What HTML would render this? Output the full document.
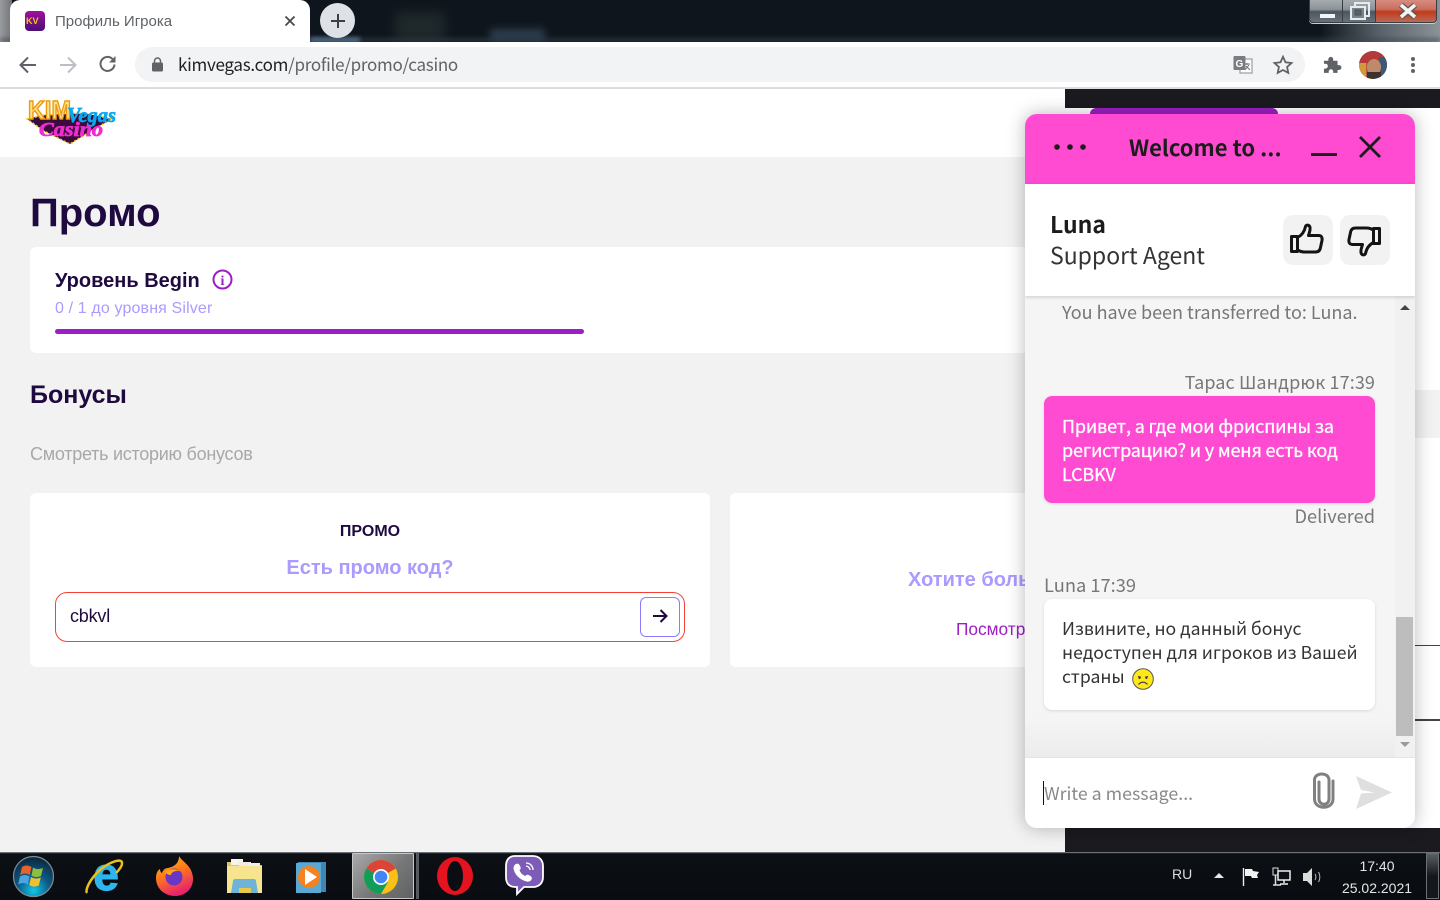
<!DOCTYPE html>
<html lang="ru"><head><meta charset="utf-8"><title>Профиль Игрока</title>
<style>
html,body{margin:0;padding:0;width:1440px;height:900px;overflow:hidden;background:#fff;font-family:"Liberation Sans",sans-serif}
.a{position:absolute}
.t{position:absolute;white-space:nowrap;line-height:1}
.n{font-family:"Noto Sans CJK SC","Noto Sans CJK JP","Liberation Sans",sans-serif}
svg{position:absolute;display:block;overflow:visible}
</style></head><body>

<!-- title bar -->
<div class="a" style="left:0;top:0;width:1440px;height:42px;background:#0e151c;overflow:hidden">
  <div class="a" style="left:0;top:0;width:12px;height:42px;background:linear-gradient(90deg,#9a9c9e,#70757a)"></div>
  <div class="a" style="left:1320px;top:0;width:120px;height:42px;background:linear-gradient(90deg,#0e151c 0,#59626a 50%,#8b9298 100%)"></div>
  <div class="a" style="left:395px;top:12px;width:50px;height:30px;background:#2d3a38;filter:blur(6px);opacity:.55"></div>
  <div class="a" style="left:490px;top:29px;width:55px;height:12px;background:#3a4f66;filter:blur(4px);opacity:.7"></div>
  <div class="a" style="left:310px;top:38px;width:50px;height:4px;background:#6fa0cc;filter:blur(2px)"></div>
  <div class="a" style="left:0;top:38px;width:1440px;height:4px;background:#3a434c;filter:blur(2px);opacity:.6"></div>
</div>
<!-- window buttons -->
<div class="a" style="left:1309px;top:-2px;width:34px;height:25px;background:linear-gradient(#a7adb1 0,#8d9499 45%,#4c5660 55%,#68727c 100%);border:1px solid #3a3f44;box-sizing:border-box;border-radius:0 0 0 4px;box-shadow:0 1px 0 #c9cdd0"></div>
<div class="a" style="left:1343px;top:-2px;width:33px;height:25px;background:linear-gradient(#a7adb1 0,#8d9499 45%,#4c5660 55%,#68727c 100%);border:1px solid #3a3f44;border-left:0;box-sizing:border-box;box-shadow:0 1px 0 #c9cdd0"></div>
<div class="a" style="left:1376px;top:-2px;width:61px;height:25px;background:linear-gradient(#d98f82 0,#c96e5e 45%,#c23a1a 55%,#b96a58 100%);border:1px solid #3a3f44;border-left:0;box-sizing:border-box;border-radius:0 0 4px 0;box-shadow:0 1px 0 #c9cdd0"></div>
<div class="a" style="left:1320px;top:14px;width:15px;height:4px;background:#f2f4f5"></div>
<svg style="left:0;top:0" width="1440" height="30">
  <rect x="1355" y="3" width="14" height="13" fill="none" stroke="#e8ebec" stroke-width="2"/>
  <rect x="1351" y="7" width="14" height="12" fill="#7a838a" stroke="#e8ebec" stroke-width="2"/>
  <rect x="1355" y="10" width="6" height="5" fill="#59626a" stroke="#4a5157" stroke-width="1"/>
  <path d="M1401 5l14 12M1415 5l-14 12" stroke="#555" stroke-width="6"/>
  <path d="M1401 5l14 12M1415 5l-14 12" stroke="#f4f4f4" stroke-width="3.600"/>
</svg>

<!-- tab -->
<div class="a" style="left:10px;top:0;width:300px;height:42px;background:#fff;border-radius:10px 10px 0 0"></div>
<div class="a" style="left:25px;top:11px;width:20px;height:20px;border-radius:4px;background:linear-gradient(#a0119e,#4c0f73)"></div>
<div class="t" style="left:26px;top:17px;font:bold 9px/9px 'Liberation Sans',sans-serif;color:#f7c51e">KV</div>
<div class="t" style="left:55px;top:14px;font-size:15px;color:#5f6368">Профиль Игрока</div>
<svg style="left:284px;top:15px" width="12" height="12"><path d="M1.500 1.500l9 9M10.500 1.500l-9 9" stroke="#45484c" stroke-width="1.800"/></svg>
<div class="a" style="left:320px;top:3px;width:35px;height:35px;border-radius:50%;background:#dee1e6"></div>
<svg style="left:329px;top:12px" width="18" height="18"><path d="M9 2v14M2 9h14" stroke="#3c4043" stroke-width="2"/></svg>

<!-- toolbar -->
<div class="a" style="left:0;top:42px;width:1440px;height:45px;background:#fff"></div>
<div class="a" style="left:0;top:87px;width:1440px;height:2px;background:#dadce0"></div>
<svg style="left:18px;top:55px" width="20" height="20"><path d="M18 10H2.500M10 2.500L2.500 10l7.500 7.500" fill="none" stroke="#5f6368" stroke-width="2"/></svg>
<svg style="left:58px;top:55px" width="20" height="20"><path d="M2 10h15.500M10 2.500l7.500 7.500-7.500 7.500" fill="none" stroke="#bcbfc3" stroke-width="2"/></svg>
<svg style="left:98px;top:54px" width="20" height="20"><path d="M16.500 10.500A7 7 0 1 1 14.500 5" fill="none" stroke="#5f6368" stroke-width="2"/><path d="M17.500 2v6.500H11z" fill="#5f6368"/></svg>
<div class="a" style="left:135px;top:47px;width:1170px;height:35px;border-radius:18px;background:#f1f3f4"></div>
<svg style="left:151px;top:57px" width="14" height="16"><rect x="1" y="5.500" width="11" height="9" rx="1.500" fill="#5f6368"/><path d="M3.500 6V4a3 3 0 0 1 6 0v2" fill="none" stroke="#5f6368" stroke-width="1.500"/></svg>
<div class="t n" style="left:178px;top:55px;font-size:17px;letter-spacing:-.28px;color:#202124">kimvegas.com<span style="color:#5f6368">/profile/promo/casino</span></div>
<svg style="left:1233px;top:55px" width="20" height="20">
  <rect x="7" y="4" width="12" height="14" fill="#fff" stroke="#9a9da0" stroke-width="1.200"/>
  <rect x="0.500" y="1" width="12" height="14" rx="1" fill="#797c80"/>
  <text x="2.500" y="12" font-family="Liberation Sans" font-weight="bold" font-size="10" fill="#fff">G</text>
  <path d="M11 9h6M14 8v2M12 15l4-5M13 11l4 4" stroke="#6d7074" stroke-width="1" fill="none"/>
</svg>
<svg style="left:1273px;top:55px" width="20" height="20"><path d="M10 1.800l2.500 5.500 6 .7-4.400 4 1.200 5.900L10 15l-5.300 2.900 1.200-5.900-4.400-4 6-.7z" fill="none" stroke="#5f6368" stroke-width="1.800"/></svg>
<svg style="left:1323px;top:55px" width="20" height="20"><path d="M1 6.500h4.500V5a2.500 2.500 0 0 1 5 0v1.500H15v4.500h1.500a2.500 2.500 0 0 1 0 5H15v3H10.500v-1.500a2.300 2.300 0 0 0-4.600 0V19H1v-4.500h1.500a2.500 2.500 0 0 0 0-5H1z" fill="#5f6368" transform="translate(0 -.5) scale(.97)"/></svg>
<div class="a" style="left:1359px;top:51px;width:28px;height:28px;border-radius:50%;overflow:hidden;background:#b85a3a">
  <div class="a" style="left:0;top:0;width:28px;height:12px;background:#b23a3a"></div>
  <div class="a" style="left:0;top:12px;width:7px;height:16px;background:#cf9a3c"></div>
  <div class="a" style="left:20px;top:6px;width:8px;height:22px;background:#3a5a78"></div>
  <div class="a" style="left:8px;top:8px;width:14px;height:16px;border-radius:50%;background:#c08a6a"></div>
  <div class="a" style="left:8px;top:21px;width:14px;height:7px;background:#3a3330"></div>
</div>
<svg style="left:1410px;top:56px" width="6" height="18"><circle cx="3" cy="3" r="2" fill="#5f6368"/><circle cx="3" cy="9" r="2" fill="#5f6368"/><circle cx="3" cy="15" r="2" fill="#5f6368"/></svg>

<!-- page -->
<div class="a" style="left:0;top:89px;width:1065px;height:68px;background:#fff"></div>
<div class="a" style="left:0;top:157px;width:1065px;height:695px;background:#f2f2f2"></div>
<!-- logo -->
<svg style="left:24px;top:95px" width="94" height="52" viewBox="0 0 94 52">
  <path d="M3 24L20 20 60 18 88 24 72 33 46 49 20 36z" fill="#3a0c3c" stroke="#f7d21c" stroke-width="1.500" stroke-dasharray="2 2"/>
  <text x="4" y="24" font-family="Liberation Sans" font-weight="bold" font-size="26" textLength="43" lengthAdjust="spacingAndGlyphs" fill="#fbe48e" stroke="#ee9a10" stroke-width="1.500">KIM</text>
  <text x="43" y="27" font-family="Liberation Serif" font-style="italic" font-weight="bold" font-size="21" textLength="49" lengthAdjust="spacingAndGlyphs" fill="#0aa8f0" stroke="#0aa8f0" stroke-width=".7">Vegas</text>
  <text x="15" y="41" font-family="Liberation Serif" font-style="italic" font-weight="bold" font-size="20" textLength="64" lengthAdjust="spacingAndGlyphs" fill="#f02cd0" stroke="#f02cd0" stroke-width=".8">Casino</text>
</svg>

<div class="t" style="left:30px;top:193px;font-size:40px;font-weight:bold;color:#1f0a40">Промо</div>
<div class="a" style="left:30px;top:247px;width:1020px;height:106px;background:#fff;border-radius:6px"></div>
<div class="t" style="left:55px;top:271px;font-size:20px;font-weight:bold;color:#1f0a40">Уровень Begin</div>
<svg style="left:212px;top:269px" width="21" height="21"><circle cx="10.500" cy="10.500" r="9" fill="none" stroke="#9b1fc4" stroke-width="2"/><text x="10.500" y="16" text-anchor="middle" font-family="Liberation Serif" font-weight="bold" font-size="14" fill="#9b1fc4">i</text></svg>
<div class="t" style="left:55px;top:301px;font-size:16px;letter-spacing:.14px;color:#a99bff">0 / 1 до уровня Silver</div>
<div class="a" style="left:55px;top:329px;width:529px;height:5px;border-radius:3px;background:#9b1fc4"></div>
<div class="t" style="left:30px;top:383px;font-size:25px;font-weight:bold;color:#1f0a40">Бонусы</div>
<div class="t" style="left:30px;top:445px;font-size:18px;letter-spacing:-.26px;color:#a8a8a8">Смотреть историю бонусов</div>

<div class="a" style="left:30px;top:493px;width:680px;height:174px;background:#fff;border-radius:6px"></div>
<div class="t" style="left:30px;width:680px;text-align:center;top:524px;font-size:16px;font-weight:bold;color:#1f0a40">ПРОМО</div>
<div class="t" style="left:30px;width:680px;text-align:center;top:558px;font-size:20px;font-weight:bold;color:#a99bff">Есть промо код?</div>
<div class="a" style="left:55px;top:592px;width:630px;height:50px;box-sizing:border-box;border:1px solid #f44336;border-radius:12px"></div>
<div class="t" style="left:70px;top:607px;font-size:18px;letter-spacing:-.2px;color:#1f0a40">cbkvl</div>
<div class="a" style="left:640px;top:597px;width:40px;height:40px;box-sizing:border-box;border:1px solid #8b7bff;border-radius:6px"></div>
<svg style="left:651px;top:607px" width="18" height="18"><path d="M2 9h13M9.500 3l6 6-6 6" fill="none" stroke="#1f0a40" stroke-width="2"/></svg>

<div class="a" style="left:730px;top:493px;width:320px;height:174px;background:#fff;border-radius:6px"></div>
<div class="t" style="left:908px;top:570px;font-size:20px;font-weight:bold;color:#a99bff">Хотите больше</div>
<div class="t" style="left:956px;top:621px;font-size:17.300px;color:#9b1fc4">Посмотреть</div>

<!-- right side -->
<div class="a" style="left:1065px;top:89px;width:375px;height:19px;background:#1a1a1f"></div>
<div class="a" style="left:1065px;top:108px;width:375px;height:744px;background:#fff"></div>
<div class="a" style="left:1065px;top:828px;width:375px;height:24px;background:#1a1a1f"></div>
<div class="a" style="left:1090px;top:108px;width:188px;height:12px;background:#9b1fc4;border-radius:6px 6px 0 0"></div>
<div class="a" style="left:1415px;top:390px;width:25px;height:48px;background:#f2f2f2"></div>
<div class="a" style="left:1415px;top:645px;width:25px;height:1px;background:#444"></div>
<div class="a" style="left:1415px;top:719px;width:25px;height:2px;background:#444"></div>

<!-- chat widget -->
<div class="a n" style="left:1025px;top:114px;width:390px;height:714px;background:#f5f5f5;border-radius:12px;box-shadow:0 0 18px rgba(0,0,0,.28);overflow:hidden;isolation:isolate">
  <div class="a" style="left:0;top:0;width:390px;height:70px;background:#ff4bd2"></div>
  <div class="a" style="left:370px;top:182px;width:20px;height:461px;background:#f1f1f1"></div>
  <div class="a" style="left:371px;top:503px;width:17px;height:119px;background:#bdbdbd"></div>
  <div class="a" style="left:0;top:603px;width:370px;height:40px;background:linear-gradient(rgba(236,236,236,0),#ececec)"></div>
  <div class="a" style="left:0;top:643px;width:390px;height:71px;background:#fff;border-top:1px solid #e4e4e4;box-sizing:border-box"></div>
  <div class="a" style="left:0;top:70px;width:390px;height:112px;background:#fff;box-shadow:0 1px 4px rgba(0,0,0,.18)"></div>
</div>
<svg style="left:1053px;top:143px" width="34" height="8"><circle cx="4" cy="4" r="2.800" fill="#1c1c1c"/><circle cx="17" cy="4" r="2.800" fill="#1c1c1c"/><circle cx="30" cy="4" r="2.800" fill="#1c1c1c"/></svg>
<div class="t n" style="left:1129px;top:136px;font-size:22px;font-weight:bold;color:#1c1c1c">Welcome to ...</div>
<div class="a" style="left:1311px;top:153px;width:26px;height:3px;background:#1c1c1c"></div>
<svg style="left:1358px;top:135px" width="24" height="24"><path d="M2 2l20 20M22 2L2 22" stroke="#1c1c1c" stroke-width="2.800"/></svg>
<div class="t n" style="left:1050px;top:212px;font-size:23px;font-weight:bold;color:#1c1c1c">Luna</div>
<div class="t n" style="left:1050px;top:243px;font-size:23px;color:#333">Support Agent</div>
<div class="a" style="left:1283px;top:215px;width:50px;height:50px;border-radius:10px;background:#f2f2f2"></div>
<div class="a" style="left:1340px;top:215px;width:50px;height:50px;border-radius:10px;background:#f2f2f2"></div>
<svg style="left:1290px;top:223px" width="34" height="32" fill="none" stroke="#141414" stroke-width="3" stroke-linejoin="round"><path d="M1.500 13.500h6v15h-6zM7.500 14.500c4-2 7-6 8-11 .5-2 4-2 4.500 1 .5 3-1 6-1.500 8h10c3 0 4 2 3.500 5l-1.500 7c-.5 3-2 4.500-5 4.500H14c-3 0-4.500-1-6.500-2"/></svg>
<svg style="left:1347px;top:225px" width="34" height="32" fill="none" stroke="#141414" stroke-width="3" stroke-linejoin="round"><path transform="rotate(180 17 16)" d="M1.500 13.500h6v15h-6zM7.500 14.500c4-2 7-6 8-11 .5-2 4-2 4.500 1 .5 3-1 6-1.500 8h10c3 0 4 2 3.500 5l-1.500 7c-.5 3-2 4.500-5 4.500H14c-3 0-4.500-1-6.500-2"/></svg>

<svg style="left:1399px;top:304px" width="12" height="8"><path d="M6 1l5 5H1z" fill="#444"/></svg>
<svg style="left:1399px;top:741px" width="12" height="8"><path d="M1 1h10L6 6z" fill="#9a9a9a"/></svg>

<div class="t n" style="left:1062px;top:303px;font-size:18px;color:#777">You have been transferred to: Luna.</div>
<div class="t n" style="right:65px;top:373px;font-size:18px;letter-spacing:.1px;color:#777">Тарас Шандрюк 17:39</div>
<div class="a" style="left:1044px;top:396px;width:331px;height:107px;border-radius:8px;background:#ff4bd2;box-shadow:0 1px 3px rgba(0,0,0,.12)"></div>
<div class="t n" style="left:1062px;top:414px;font-size:18px;line-height:24px;color:#fff;letter-spacing:-.15px;-webkit-text-stroke:.3px #fff">Привет, а где мои фриспины за<br>регистрацию? и у меня есть код<br>LCBKV</div>
<div class="t n" style="right:65px;top:507px;font-size:18.200px;color:#777">Delivered</div>
<div class="t n" style="left:1044px;top:576px;font-size:18.300px;color:#777">Luna 17:39</div>
<div class="a" style="left:1044px;top:599px;width:331px;height:111px;border-radius:8px;background:#fff;box-shadow:0 1px 3px rgba(0,0,0,.12)"></div>
<div class="t n" style="left:1062px;top:617px;font-size:17.600px;line-height:24px;color:#333">Извините, но данный бонус<br>недоступен для игроков из Вашей<br>страны</div>
<svg style="left:1132px;top:668px" width="22" height="22"><circle cx="11" cy="11" r="10.300" fill="#ffe81a" stroke="#555" stroke-width="1"/><path d="M6 8.500l3 .8M16 8.500l-3 .8" stroke="#444" stroke-width="1.200"/><circle cx="7.500" cy="10" r="1" fill="#333"/><circle cx="14.500" cy="10" r="1" fill="#333"/><path d="M6.500 16.500c2.500-3 6.500-3 9 0" fill="none" stroke="#444" stroke-width="1.200"/></svg>

<div class="a" style="left:1043px;top:781px;width:1px;height:24px;background:#111"></div>
<div class="t n" style="left:1044px;top:785px;font-size:17.800px;color:#8a8a8a">Write a message...</div>
<svg style="left:1311px;top:772px" width="25" height="38" fill="none" stroke="#808080" stroke-width="3" stroke-linecap="round"><path d="M8 10v17c0 7 10 7 10 0V8c0-8-14.500-8-14.500 0v19c0 11 18.500 11 18.500 0V9"/></svg>
<svg style="left:1355px;top:775px" width="38" height="35"><path d="M1 1l36 16.500L1 34 6 18.500 20 17.500 6 15z" fill="#dfdfdf"/></svg>

<!-- taskbar -->
<div class="a" style="left:0;top:852px;width:1440px;height:48px;background:linear-gradient(#0c1015,#090c11)">
  <div class="a" style="left:0;top:0;width:1440px;height:1px;background:#6a7076"></div>
  <div class="a" style="left:0;top:1px;width:1440px;height:1px;background:#1d2228"></div>
</div>
<!-- start orb -->
<svg style="left:12px;top:855px" width="43" height="43" viewBox="0 0 43 43">
  <defs><radialGradient id="o" cx=".5" cy=".85" r=".8"><stop offset="0" stop-color="#12c6e8"/><stop offset=".5" stop-color="#0e5a86"/><stop offset="1" stop-color="#0c2a40"/></radialGradient></defs>
  <circle cx="21.500" cy="21.500" r="20" fill="url(#o)" stroke="#7c8c96" stroke-width="1.200"/>
  <path d="M10 12c3-2 6-2 9.500 0l-1.800 8c-3-2-6-2-9.500 0z" fill="#e8622a"/>
  <path d="M21 12.500c3 2 6 2 10 .5l-2 8c-3.500 1.500-6.500 1.500-9.500-.5z" fill="#8fbf3a"/>
  <path d="M8 21.500c3-2 6-2 9.500 0l-1.800 8c-3-2-6-2-9.500 0z" fill="#4aa6e0"/>
  <path d="M19 22c3 2 6 2 9.800.5l-2 8c-3.500 1.500-6.500 1.500-9.500-.5z" fill="#f0c030"/>
</svg>
<!-- IE -->
<svg style="left:82px;top:855px" width="44" height="44" viewBox="0 0 44 44">
  <text x="24" y="35" text-anchor="middle" font-family="Liberation Sans" font-weight="bold" font-size="46" fill="#2cb5ee" stroke="#2cb5ee" stroke-width="1.200">e</text>
  <path d="M5 38c-3-4 8-24 26-31 5-2 9-2 9 1 .5 3-3 7-6 10" fill="none" stroke="#e8c020" stroke-width="2.500"/>
</svg>
<!-- Firefox -->
<svg style="left:155px;top:855px" width="40" height="42" viewBox="0 0 40 42">
  <defs><linearGradient id="f" x1="0" y1="0" x2=".4" y2="1"><stop offset="0" stop-color="#ffc21e"/><stop offset=".5" stop-color="#ff7a1a"/><stop offset="1" stop-color="#e8256a"/></linearGradient></defs>
  <path d="M24 1c3 6 13 9 14 22 .5 11-8 18-18 18S1 34 1 23c0-5 2-8 4-9 0 2 1 4 2 4 1-3 3-5 6-5 4-1 11-3 11-12z" fill="url(#f)"/>
  <circle cx="19" cy="22" r="8.500" fill="#6a36c6"/>
  <path d="M10 17c4-4 13-3 15-1-4-1-9 1-9 4-3 0-4-1-6-3z" fill="#ffa21e"/>
</svg>
<!-- Explorer -->
<svg style="left:225px;top:856px" width="40" height="40" viewBox="0 0 40 40">
  <path d="M2 6h12l3 3h20v28H2z" fill="#e0c465"/>
  <rect x="6" y="3" width="12" height="6" fill="#f4f4f0"/><rect x="14" y="6" width="12" height="5" fill="#f4e8e0"/><rect x="24" y="7" width="11" height="5" fill="#e8f0f6"/>
  <rect x="2" y="10" width="35" height="27" fill="#f6e48e"/>
  <path d="M6 37l2-12c.3-1.500 1-2 2.500-2h18c1.500 0 2.200.5 2.500 2l2 12z" fill="#6fb4d8"/>
  <rect x="14" y="32" width="12" height="5" fill="#e8c94e"/>
</svg>
<!-- WMP -->
<svg style="left:295px;top:860px" width="32" height="34" viewBox="0 0 32 34">
  <rect x="3" y="2" width="28" height="30" fill="#3f86b4"/><rect x="1" y="3" width="25" height="30" fill="#5aa8d4"/>
  <circle cx="14" cy="17" r="11" fill="#f5821e"/><path d="M10 9l12 8-12 8z" fill="#fff"/>
</svg>
<!-- Chrome active -->
<div class="a" style="left:352px;top:853px;width:62px;height:46px;box-sizing:border-box;border:1px solid #c8c8c8;background:linear-gradient(135deg,#a9a9a9,#777 55%,#5f6263);border-radius:1px"></div>
<div class="a" style="left:416px;top:853px;width:3px;height:46px;background:#555b60"></div>
<svg style="left:364px;top:860px" width="34" height="34" viewBox="0 0 34 34">
  <circle cx="17" cy="17" r="17" fill="#fbc116"/>
  <path d="M17 17L2.300 8.500A17 17 0 0 1 31.700 8.500z" fill="#db4437"/>
  <path d="M17 17L2.300 8.500A17 17 0 0 0 17 34l7-12z" fill="#0f9d58"/>
  <circle cx="17" cy="17" r="8" fill="#fff"/><circle cx="17" cy="17" r="6.300" fill="#4285f4"/>
</svg>
<!-- Opera -->
<svg style="left:436px;top:857px" width="38" height="38" viewBox="0 0 38 38">
  <ellipse cx="19" cy="19" rx="18" ry="19" fill="#e5121f"/><ellipse cx="19" cy="19" rx="8" ry="15" fill="#0a0d12"/>
</svg>
<!-- Viber -->
<svg style="left:505px;top:855px" width="39" height="41" viewBox="0 0 39 41">
  <path d="M10 1h18c6 0 10 4 10 10v11c0 6-4 10-10 10h-9l-7 7v-7h-2C4 32 1 28 1 22V11C1 5 4 1 10 1z" fill="#7d5cb8" stroke="#fff" stroke-width="1.800"/>
  <path d="M11 9c2-1 3 0 4 2 1 2 1 3-.5 4 1 3 3 5 6 6 1-1.500 2-1.500 4-.5 2 1 3 2 2 4-1 2-3 2.500-5 2-7-2-12-7-13-13 0-2 1-4 2.500-4.500z" fill="#fff"/>
  <path d="M21 8c4 0 7 3 7 7M21 11c2 0 4 2 4 4" fill="none" stroke="#fff" stroke-width="1.300"/>
</svg>

<!-- tray -->
<div class="t" style="left:1172px;top:867px;font-size:14px;color:#dcdcdc">RU</div>
<svg style="left:1213px;top:872px" width="12" height="8"><path d="M6 1l5 5H1z" fill="#e8e8e8"/></svg>
<svg style="left:1242px;top:867px" width="20" height="20"><path d="M1.500 1v18" stroke="#eee" stroke-width="1.400"/><path d="M3 2h7l1 2 6 1-2 3 1 3h-6l-1-2H3z" fill="#f2f2f2"/></svg>
<svg style="left:1272px;top:867px" width="20" height="20"><rect x="1" y="1" width="5" height="7" fill="none" stroke="#ddd"/><path d="M3.500 8v10M1 18h8" stroke="#ddd" stroke-width="1.500"/><rect x="6" y="4" width="12" height="9" fill="#0c1015" stroke="#eee" stroke-width="1.500"/><path d="M12 13v3M8 17h8" stroke="#eee" stroke-width="1.500"/></svg>
<svg style="left:1302px;top:867px" width="20" height="20"><path d="M1 6h4l5-5v18l-5-5H1z" fill="#dcdcdc"/><path d="M13 7c1.200 2 1.200 4 0 6M16.500 5c1.800 3 1.800 7 0 10" fill="none" stroke="#bbb" stroke-width="1"/></svg>
<div class="t" style="left:1340px;width:74px;text-align:center;top:859px;font-size:14px;color:#e6e6e6">17:40</div>
<div class="t" style="left:1340px;width:74px;text-align:center;top:881px;font-size:14px;color:#e6e6e6">25.02.2021</div>
<div class="a" style="left:1426px;top:853px;width:13px;height:46px;box-sizing:border-box;border:1px solid #6a7076;background:linear-gradient(#5a5f64,#14181c 50%)"></div>
</body></html>
